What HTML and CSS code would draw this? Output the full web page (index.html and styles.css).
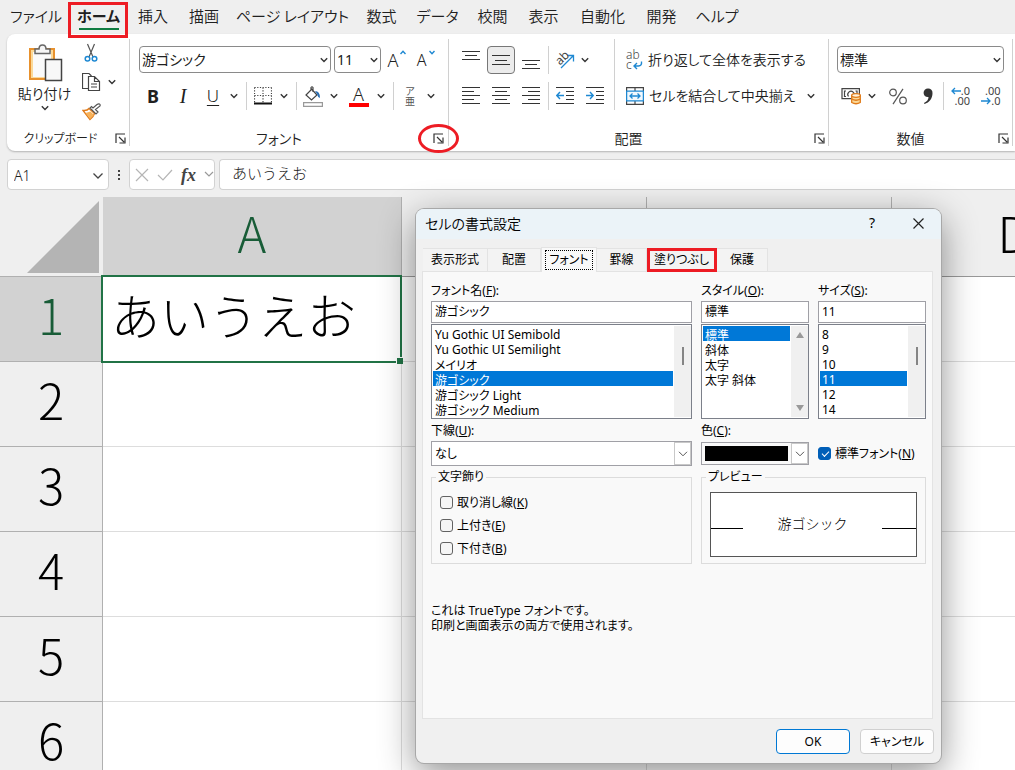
FILE: index.html
```html
<!DOCTYPE html>
<html lang="ja">
<head>
<meta charset="utf-8">
<meta name="viewport" content="width=device-width, initial-scale=1">
<title>セルの書式設定</title>
<link rel="stylesheet" href="styles.css">
</head>
<body>
<svg class="defs" aria-hidden="true">
  <symbol id="chev" viewBox="0 0 8 8"><path d="M.8 2.2 4 5.4 7.2 2.2" fill="none" stroke="#333" stroke-width="1.4"/></symbol>
  <symbol id="launch" viewBox="0 0 11 11"><path d="M1 10V1h9M4 4l5 5M10 4.500V10H4.500" fill="none" stroke="#333" stroke-width="1.200"/></symbol>
</svg>

<nav class="tabs" aria-label="リボン タブ">
  <button>ファイル</button>
  <button class="current marked">ホーム</button>
  <button>挿入</button>
  <button>描画</button>
  <button>ページ レイアウト</button>
  <button>数式</button>
  <button>データ</button>
  <button>校閲</button>
  <button>表示</button>
  <button>自動化</button>
  <button>開発</button>
  <button>ヘルプ</button>
</nav>

<section class="ribbon" aria-label="ホーム">
  <div class="group g-clip">
    <div class="tools clip-tools">
      <button class="paste">
        <svg width="36" height="40" viewBox="0 0 36 40"><path d="M3 5h24v30H3z" fill="#fbd998" stroke="#e8912d" stroke-width="2"/><path d="M6 8h18v25H6z" fill="#fafafa"/><path d="M8 9.500V5h4c0-5.500 7-5.500 7 0h4v4.500z" fill="#f5f5f5" stroke="#666" stroke-width="1.500"/><path d="M18.500 15.500h16v21h-16z" fill="#f8f8f8" stroke="#444" stroke-width="1.500"/></svg>
        <span>貼り付け</span>
        <svg width="8" height="8"><use href="#chev"/></svg>
      </button>
      <div class="clip-side">
        <button aria-label="切り取り"><svg width="14" height="20" viewBox="0 0 14 20"><path d="M3.500 1 9 14M10.500 1 5 14" fill="none" stroke="#555" stroke-width="1.200"/><circle cx="3.500" cy="15.800" r="2.300" fill="none" stroke="#1e88d2" stroke-width="1.500"/><circle cx="10.500" cy="15.800" r="2.300" fill="none" stroke="#1e88d2" stroke-width="1.500"/></svg></button>
        <button aria-label="コピー"><svg width="20" height="20" viewBox="0 0 20 20"><path d="M6 16.500H.5v-15H7l2.500 2.500" fill="none" stroke="#444" stroke-width="1.200"/><path d="M6.500 4.500h6l5 5v9h-11zM12.500 4.500v5h5M9 12h6M9 15h6" fill="#fff" stroke="#444" stroke-width="1.200"/></svg><svg width="8" height="8"><use href="#chev"/></svg></button>
        <button aria-label="書式のコピー"><svg width="20" height="18" viewBox="0 0 20 18"><path d="M1 7.500c3 .3 5-.5 6-2l5.500 5c-1 3-2.500 4.500-4.500 6z" fill="#fff" stroke="#e07b1a" stroke-width="1.400"/><path d="M3.500 10l5-1.500 3.500 3.500-4 4z" fill="#f7b25a"/><path d="M8 5l6 6 2-2-2.500-2.500L18 3q.5-1.500-.5-2T15 1.500L11 5 9.500 3.500z" fill="#fff" stroke="#555" stroke-width="1.200"/></svg></button>
      </div>
    </div>
    <div class="foot"><span>クリップボード</span><button class="launch" aria-label="クリップボードの設定"><svg width="11" height="11"><use href="#launch"/></svg></button></div>
  </div>

  <div class="group g-font">
    <div class="tools">
      <div class="row font-top">
        <span class="combo"><select aria-label="フォント"><option>游ゴシック</option></select><svg width="8" height="8"><use href="#chev"/></svg></span>
        <span class="combo"><select aria-label="フォント サイズ"><option>11</option></select><svg width="8" height="8"><use href="#chev"/></svg></span>
        <button class="grow" aria-label="フォント サイズの拡大">A<svg width="6" height="5" viewBox="0 0 6 5"><path d="M.5 4 3 1.200 5.500 4" fill="none" stroke="#1e88d2" stroke-width="1.400"/></svg></button>
        <button class="grow shrink" aria-label="フォント サイズの縮小">A<svg width="6" height="5" viewBox="0 0 6 5"><path d="M.5 1 3 3.800 5.500 1" fill="none" stroke="#1e88d2" stroke-width="1.400"/></svg></button>
      </div>
      <div class="row font-bottom">
        <button class="b">B</button>
        <button class="i">I</button>
        <button class="u">U</button>
        <button aria-label="下線の種類"><svg width="8" height="8"><use href="#chev"/></svg></button>
        <i class="sep"></i>
        <button aria-label="罫線"><svg width="18" height="18" viewBox="0 0 18 18"><path d="M.5.5h17M.5.5v15M17.500.5v15M9 .5v15M.5 8.500h17" fill="none" stroke="#444" stroke-width="1.200" stroke-dasharray="1.200 1.500"/><path d="M0 16.500h18" stroke="#111" stroke-width="2"/></svg></button>
        <button aria-label="罫線の種類"><svg width="8" height="8"><use href="#chev"/></svg></button>
        <i class="sep"></i>
        <button aria-label="塗りつぶしの色"><svg width="20" height="21" viewBox="0 0 20 21"><path d="M8 2.500 14 9l-5.500 5L3 9l5-5V1.500q1-1.500 2 0V6" fill="#fff" stroke="#444" stroke-width="1.200"/><path d="M12 5q5 0 5 7-2.500-1-3-4z" fill="#2a6fb5"/><path d="M.6 16.600h18.800v3.800H.6z" fill="#fff" stroke="#999" stroke-width="1.200"/></svg></button>
        <button aria-label="塗りつぶしの色の一覧"><svg width="8" height="8"><use href="#chev"/></svg></button>
        <button class="color-a">A</button>
        <button aria-label="文字色の一覧"><svg width="8" height="8"><use href="#chev"/></svg></button>
        <i class="sep"></i>
        <button class="ruby"><span>ア</span><span>亜</span></button>
        <button aria-label="ふりがなの設定"><svg width="8" height="8"><use href="#chev"/></svg></button>
      </div>
    </div>
    <div class="foot"><span>フォント</span><button class="launch ringed" aria-label="フォントの設定"><svg width="11" height="11"><use href="#launch"/></svg></button></div>
  </div>

  <div class="group g-align">
    <div class="tools align-tools">
      <div class="align-grid">
        <button aria-label="上揃え"><svg width="18" height="18" viewBox="0 0 18 18" class="ln"><path d="M0 .5h18M3 4.500h12M0 8.500h18"/></svg></button>
        <button class="on" aria-label="上下中央揃え"><svg width="18" height="18" viewBox="0 0 18 18" class="ln"><path d="M0 4.500h18M3 9.500h12M0 13.500h18"/></svg></button>
        <button aria-label="下揃え"><svg width="18" height="18" viewBox="0 0 18 18" class="ln"><path d="M0 9.500h18M3 13.500h12M0 17.500h18"/></svg></button>
        <i class="sep"></i>
        <button class="orient" aria-label="方向"><span>ab</span><svg width="20" height="20" viewBox="0 0 20 20"><path d="M6 18 18 6M12.500 5.500h6v6" fill="none" stroke="#1e88d2" stroke-width="1.300"/></svg></button>
        <button aria-label="方向の一覧"><svg width="8" height="8"><use href="#chev"/></svg></button>
        <button aria-label="左揃え"><svg width="18" height="18" viewBox="0 0 18 18" class="ln"><path d="M0 .5h18M0 4.500h12M0 8.500h18M0 12.500h12M0 16.500h18"/></svg></button>
        <button aria-label="中央揃え"><svg width="18" height="18" viewBox="0 0 18 18" class="ln"><path d="M0 .5h18M3 4.500h12M0 8.500h18M3 12.500h12M0 16.500h18"/></svg></button>
        <button aria-label="右揃え"><svg width="18" height="18" viewBox="0 0 18 18" class="ln"><path d="M0 .5h18M6 4.500h12M0 8.500h18M6 12.500h12M0 16.500h18"/></svg></button>
        <i class="sep"></i>
        <button aria-label="インデントを減らす"><svg width="18" height="18" viewBox="0 0 18 18" class="ln"><path d="M0 .5h18M10 4.500h8M10 8.500h8M10 12.500h8M0 16.500h18"/><path class="bl" d="M8 8.500H.8M4 5 .8 8.500 4 12"/></svg></button>
        <button class="indent" aria-label="インデントを増やす"><svg width="18" height="18" viewBox="0 0 18 18" class="ln"><path d="M0 .5h18M10 4.500h8M10 8.500h8M10 12.500h8M0 16.500h18"/><path class="bl" d="M0 8.500h7.200M4 5l3.200 3.500L4 12"/></svg></button>
      </div>
      <div class="align-wide">
        <button><span class="abc"><span>ab</span><span>c<svg width="10" height="9" viewBox="0 0 10 9"><path d="M8.500.5q.5 4.500-3 4.500H1M4 2 1 5l3 3" fill="none" stroke="#1e88d2" stroke-width="1.400"/></svg></span></span><span>折り返して全体を表示する</span></button>
        <button><svg width="18" height="18" viewBox="0 0 18 18"><path d="M.6 4V.6h16.800V4M.6 14v3.400h16.800V14M9 .6V4M9 14v3.400" fill="none" stroke="#444" stroke-width="1.200"/><path d="M.6 4.200h16.800v9.600H.6z" fill="#f1f8fd" stroke="#1e88d2" stroke-width="1.300"/><path d="M4 9h10M6.500 6.500 4 9l2.500 2.500M11.500 6.500 14 9l-2.500 2.500" fill="none" stroke="#1e88d2" stroke-width="1.300"/></svg><span>セルを結合して中央揃え</span><svg class="end-chev" width="8" height="8"><use href="#chev"/></svg></button>
      </div>
    </div>
    <div class="foot"><span>配置</span><button class="launch" aria-label="配置の設定"><svg width="11" height="11"><use href="#launch"/></svg></button></div>
  </div>

  <div class="group g-num">
    <div class="tools">
      <div class="row num-top">
        <span class="combo"><select aria-label="数値の書式"><option>標準</option></select><svg width="8" height="8"><use href="#chev"/></svg></span>
      </div>
      <div class="row num-bottom">
        <button aria-label="通貨表示形式"><svg width="20" height="18" viewBox="0 0 20 18"><path d="M1 1.600h17.400v10H1z" fill="#fff" stroke="#444" stroke-width="1.200"/><path d="M5 4H3.500v5.500H5M14.500 4H16v4M7.500 9.500a3.200 3.200 0 1 1 5 0" fill="none" stroke="#444" stroke-width="1.200"/><path d="M10.700 8.500v7q4.300 2.500 8.600 0v-7z" fill="#fbd998" stroke="#e07b1a" stroke-width="1.300"/><ellipse cx="15" cy="8.500" rx="4.300" ry="1.800" fill="#fff3dc" stroke="#e07b1a" stroke-width="1.300"/><path d="M10.700 12q4.300 2.500 8.600 0" fill="none" stroke="#e07b1a" stroke-width="1.300"/></svg></button>
        <button aria-label="通貨の一覧"><svg width="8" height="8"><use href="#chev"/></svg></button>
        <button aria-label="パーセント スタイル"><svg width="18" height="17" viewBox="0 0 18 17" fill="none" stroke="#555" stroke-width="1.200"><circle cx="4" cy="4.500" r="3.300"/><circle cx="14" cy="12.500" r="3.300"/><path d="M14 .8 4 16.200"/></svg></button>
        <button aria-label="桁区切りスタイル"><svg width="10" height="17" viewBox="0 0 10 17"><path d="M5 .5a4.300 4.300 0 0 1 4.500 4.700C9.500 10 6.500 14.500 1.500 16L1 15c3-1.500 4.500-3.500 4.500-6C3 9.500.6 7.500.6 5A4.300 4.300 0 0 1 5 .5z" fill="#333"/></svg></button>
        <i class="sep"></i>
        <button class="dec" aria-label="小数点以下の表示桁数を増やす"><span><svg width="10" height="8" viewBox="0 0 10 8"><path d="M10 4H1M4 1 1 4l3 3" fill="none" stroke="#1e88d2" stroke-width="1.300"/></svg>.0</span><span>.00</span></button>
        <button class="dec" aria-label="小数点以下の表示桁数を減らす"><span>.00</span><span><svg width="10" height="8" viewBox="0 0 10 8"><path d="M0 4h9M6 1l3 3-3 3" fill="none" stroke="#1e88d2" stroke-width="1.300"/></svg>.0</span></button>
      </div>
    </div>
    <div class="foot"><span>数値</span><button class="launch" aria-label="数値の設定"><svg width="11" height="11"><use href="#launch"/></svg></button></div>
  </div>
</section>

<section class="formula-bar" aria-label="数式バー">
  <span class="namebox"><input aria-label="名前ボックス" value="A1"><svg width="12" height="8" viewBox="0 0 12 8"><path d="M1.500 1.500 6 6l4.500-4.500" fill="none" stroke="#444" stroke-width="1.300"/></svg></span>
  <svg class="dots" width="4" height="12" viewBox="0 0 4 12"><path d="M1 1h2v2H1zM1 5h2v2H1zM1 9h2v2H1z" fill="#444"/></svg>
  <span class="fx-box">
    <button aria-label="キャンセル"><svg width="14" height="14" viewBox="0 0 14 14"><path d="M1 1l12 12M13 1 1 13" stroke="#b5b5b5" stroke-width="1.200"/></svg></button>
    <button aria-label="入力"><svg width="16" height="12" viewBox="0 0 16 12"><path d="M1 6l5 5L15 1" fill="none" stroke="#b5b5b5" stroke-width="1.200"/></svg></button>
    <button class="fx">fx</button>
    <svg width="10" height="7" viewBox="0 0 10 7"><path d="M1 1l4 4 4-4" fill="none" stroke="#999" stroke-width="1.200"/></svg>
  </span>
  <input class="formula" aria-label="数式" value="あいうえお">
</section>

<main class="sheet">
  <table>
    <colgroup><col class="c-head"><col class="c-a"><col class="c-n"><col class="c-n"><col class="c-n"></colgroup>
    <thead>
      <tr><th class="corner"><svg width="72" height="72" viewBox="0 0 72 72"><path d="M72 0v72H0z" fill="#b4b4b4"/></svg></th><th class="sel">A</th><th></th><th></th><th>D</th></tr>
    </thead>
    <tbody>
      <tr><th class="sel">1</th><td class="active">あいうえお</td><td></td><td></td><td></td></tr>
      <tr><th>2</th><td></td><td></td><td></td><td></td></tr>
      <tr><th>3</th><td></td><td></td><td></td><td></td></tr>
      <tr><th>4</th><td></td><td></td><td></td><td></td></tr>
      <tr><th>5</th><td></td><td></td><td></td><td></td></tr>
      <tr><th>6</th><td></td><td></td><td></td><td></td></tr>
    </tbody>
  </table>
</main>

<div class="dialog" role="dialog" aria-labelledby="dlg-title">
  <header>
    <h1 id="dlg-title">セルの書式設定</h1>
    <button aria-label="ヘルプ">?</button>
    <button aria-label="閉じる"><svg width="11" height="11" viewBox="0 0 11 11"><path d="M.5.5l10 10M10.500.5l-10 10" stroke="#222" stroke-width="1.200"/></svg></button>
  </header>
  <div class="dlg-tabs" role="tablist">
    <button role="tab">表示形式</button>
    <button role="tab">配置</button>
    <button role="tab" class="front" aria-selected="true"><span>フォント</span></button>
    <button role="tab">罫線</button>
    <button role="tab" class="marked">塗りつぶし</button>
    <button role="tab">保護</button>
  </div>
  <div class="panel">
    <div class="field">
      <label for="f-name">フォント名(<u>F</u>):</label>
      <input id="f-name" value="游ゴシック">
      <div class="list">
        <select size="6" aria-label="フォント名の一覧"><option>Yu Gothic UI Semibold</option><option>Yu Gothic UI Semilight</option><option>メイリオ</option><option selected>游ゴシック</option><option>游ゴシック Light</option><option>游ゴシック Medium</option></select>
        <div class="bar"><i></i></div>
      </div>
    </div>
    <div class="field">
      <label for="f-style">スタイル(<u>O</u>):</label>
      <input id="f-style" value="標準">
      <div class="list">
        <select size="6" aria-label="スタイルの一覧"><option selected>標準</option><option>斜体</option><option>太字</option><option>太字 斜体</option></select>
        <div class="bar arrows"><svg width="10" height="7" viewBox="0 0 10 7"><path d="M5 0l4 6H1z" fill="#999"/></svg><svg width="10" height="7" viewBox="0 0 10 7"><path d="M5 7 1 1h8z" fill="#999"/></svg></div>
      </div>
    </div>
    <div class="field">
      <label for="f-size">サイズ(<u>S</u>):</label>
      <input id="f-size" value="11">
      <div class="list">
        <select size="6" aria-label="サイズの一覧"><option>8</option><option>9</option><option>10</option><option selected>11</option><option>12</option><option>14</option></select>
        <div class="bar"><i></i></div>
      </div>
    </div>
    <div class="field second">
      <label for="f-line">下線(<u>U</u>):</label>
      <span class="drop"><select id="f-line"><option>なし</option></select><i><svg width="10" height="6" viewBox="0 0 10 6"><path d="M1 .8l4 4 4-4" fill="none" stroke="#555"/></svg></i></span>
    </div>
    <div class="field second">
      <label for="f-color">色(<u>C</u>):</label>
      <span class="drop swatch"><select id="f-color"><option value="#000000" label=" "></option></select><i><svg width="10" height="6" viewBox="0 0 10 6"><path d="M1 .8l4 4 4-4" fill="none" stroke="#555"/></svg></i></span>
    </div>
    <label class="check normal"><input type="checkbox" checked><span>標準フォント(<u>N</u>)</span></label>
    <fieldset>
      <legend>文字飾り</legend>
      <label class="check"><input type="checkbox"><span>取り消し線(<u>K</u>)</span></label>
      <label class="check"><input type="checkbox"><span>上付き(<u>E</u>)</span></label>
      <label class="check"><input type="checkbox"><span>下付き(<u>B</u>)</span></label>
    </fieldset>
    <fieldset class="preview">
      <legend>プレビュー</legend>
      <div class="sample"><i></i><span>游ゴシック</span><i></i></div>
    </fieldset>
    <p>これは TrueType フォントです。<br>印刷と画面表示の両方で使用されます。</p>
  </div>
  <footer>
    <button class="ok">OK</button>
    <button>キャンセル</button>
  </footer>
</div>
</body>
</html>
```

FILE: styles.css
```css
* { box-sizing: border-box; }

body {
  margin: 0;
  height: 100vh;
  display: flex;
  flex-direction: column;
  position: relative;
  overflow: hidden;
  background: #efefef;
  color: #202020;
  font-family: "Noto Sans", "Noto Sans CJK JP", sans-serif;
  font-size: 14px;
  line-height: 20px;
  font-feature-settings: "palt";
}

button, input, select {
  margin: 0;
  padding: 0;
  border: 0;
  background: none;
  color: inherit;
  font: inherit;
  font-feature-settings: inherit;
  border-radius: 0;
  outline: 0;
}

select { appearance: none; }
svg { display: block; flex: none; }
.defs { position: absolute; width: 0; height: 0; }

/* ribbon tabs */
.tabs {
  flex: none;
  display: grid;
  grid-template-columns: 66px 59px 50px 52px 125px 53px 59px 51px 51px 67px 51px 60px;
  height: 34px;
  padding: 2px 0 0 3px;
  font-family: "Noto Sans CJK JP", sans-serif;
  font-size: 15px;
  font-weight: 350;
}
.tabs button { height: 28px; white-space: nowrap; position: relative; }
.tabs .current { font-weight: 700; }
.tabs .current::before {
  content: "";
  position: absolute;
  left: 10px;
  right: 9px;
  bottom: 0;
  height: 2px;
  background: #107c41;
}
.marked { position: relative; }
.marked::after {
  content: "";
  position: absolute;
  z-index: 2;
  inset: 0 0 -8px -1px;
  border: 3px solid #ed1c24;
  pointer-events: none;
}

/* ribbon */
.ribbon {
  flex: none;
  display: flex;
  margin-left: 7px;
  padding: 5px 0;
  background: #fff;
  border-radius: 8px 0 0 8px;
  box-shadow: 0 1px 2px rgba(0, 0, 0, .25);
}
.ribbon button { display: flex; align-items: center; justify-content: center; }
.group {
  flex: none;
  height: 107px;
  display: flex;
  flex-direction: column;
  justify-content: space-between;
  border-right: 1px solid #d0d0d0;
}
.g-clip { width: 123px; }
.g-font { width: 319px; }
.g-align { width: 380px; }
.g-num { width: 184px; }
.foot {
  display: flex;
  align-items: center;
  justify-content: center;
  position: relative;
  height: 16px;
  padding-right: 20px;
  font-weight: 350;
}
.foot span { font-family: "Noto Sans CJK JP", sans-serif; }
.g-clip .foot { padding-right: 15px; font-size: 12px; }
.launch { position: absolute; right: 3px; top: 3px; }
.ringed { right: 4px; }
.ringed::after {
  content: "";
  position: absolute;
  inset: -9px -15px;
  border: 3px solid #ed1c24;
  border-radius: 50%;
}
.sep { width: 1px; height: 28px; background: #d0d0d0; justify-self: center; align-self: center; }

.clip-tools { display: flex; }
.ribbon .paste {
  flex-direction: column;
  justify-content: flex-start;
  width: 75px;
  padding-top: 5px;
  font-weight: 350;
}
.clip-side { display: grid; grid-template-rows: 28px 30px 30px; width: 46px; }
.clip-side button { justify-content: flex-start; gap: 6px; }
.clip-side button:first-child { justify-content: center; width: 18px; }

.row { display: grid; align-items: center; }
.combo { position: relative; display: block; }
.combo select {
  width: 100%;
  height: 27px;
  padding: 0 2px;
  background: #fff;
  border: 1px solid #8a8a8a;
  border-radius: 4px;
}
.combo svg { position: absolute; right: 3px; top: 10px; pointer-events: none; }

.font-top { grid-template-columns: 192px 47px 26px 26px; column-gap: 3px; padding: 7px 0 8px 9px; }
.ribbon .grow { align-items: flex-start; gap: 2px; font-size: 18px; font-weight: 350; }
.ribbon .shrink { gap: 3px; font-size: 16px; }
.font-bottom {
  grid-template-columns: 30px 30px 30px 12px 12px 22px 20px 4px 30px 12px 37px 8px 16px 18px 24px;
  padding-left: 8px;
  height: 30px;
}
.b { font-weight: 700; font-size: 18px; }
.i { font-family: "Liberation Serif", serif; font-style: italic; font-size: 20px; }
.u { font-size: 17px; font-weight: 350; text-decoration: underline; text-underline-offset: 3px; }
.ribbon .color-a {
  justify-self: center;
  width: 20px;
  height: 21px;
  border-bottom: 4px solid #f00;
  font-size: 18px;
  font-weight: 350;
  line-height: 16px;
}
.ribbon .ruby { flex-direction: column; font-size: 10px; line-height: 10px; color: #555; }

.align-tools { display: flex; }
.align-grid {
  display: grid;
  grid-template-columns: 30px 30px 30px 4px 30px 10px;
  grid-template-rows: 28px 28px;
  row-gap: 8px;
  width: 166px;
  padding: 7px 0 0 7px;
  border-right: 1px solid #d0d0d0;
}
.align-grid .indent { width: 30px; }
.align-grid .on { width: 28px; justify-self: center; background: #ececec; border: 1px solid #777; border-radius: 4px; }
.ln { fill: none; stroke: #333; stroke-width: 1px; }
.ln .bl { stroke: #1e88d2; stroke-width: 1.4px; }
.orient { position: relative; }
.orient span {
  position: absolute;
  left: 5px;
  top: 5px;
  transform: rotate(-45deg);
  font-size: 12px;
  line-height: 14px;
  color: #444;
}
.abc { display: grid; width: 17px; font-size: 12px; line-height: 10px; text-align: left; color: #444; }
.abc span { display: flex; align-items: center; gap: 1px; height: 10px; }
.ribbon .dec { flex-direction: column; align-items: flex-end; justify-self: center; width: 19px; font-size: 11px; line-height: 10px; color: #444; }
.dec span { display: flex; align-items: center; height: 10px; }
.align-wide { display: grid; grid-template-rows: 28px 28px; row-gap: 8px; flex: 1; padding: 7px 13px 0 11px; font-weight: 350; }
.ribbon .align-wide button { justify-content: flex-start; gap: 5px; white-space: nowrap; }
.end-chev { margin-left: auto; }

.num-top { padding: 7px 8px; height: 43px; align-items: start; }
.num-bottom { grid-template-columns: 32px 10px 41px 20px 11px 23px 38px; padding-left: 6px; height: 28px; }

/* formula bar */
.formula-bar { flex: none; display: flex; align-items: center; padding: 8px 0 7px 7px; height: 46px; }
.namebox, .fx-box, .formula { height: 31px; background: #fff; border: 1px solid #d2d2d2; border-radius: 4px; }
.namebox { display: flex; align-items: center; width: 102px; padding: 2px 4px 0 6px; }
.namebox input { flex: 1; min-width: 0; font-weight: 350; }
.dots { margin: 0 8px; }
.fx-box { display: flex; align-items: center; gap: 8px; width: 86px; padding: 0 1px 0 5px; }
.fx { font-family: "Liberation Serif", serif; font-style: italic; font-weight: 700; font-size: 18px; color: #444; }
.formula {
  flex: 1;
  min-width: 0;
  margin-left: 4px;
  padding: 0 12px 4px;
  border-right: 0;
  border-radius: 4px 0 0 4px;
  font-family: "Noto Sans CJK JP", sans-serif;
  font-size: 15px;
  font-weight: 300;
  font-feature-settings: normal;
}

/* worksheet */
.sheet { flex: 1; min-height: 0; overflow: hidden; }
.sheet table {
  table-layout: fixed;
  width: 1137px;
  border-collapse: separate;
  border-spacing: 0;
  font-family: "Noto Sans CJK JP", sans-serif;
  font-size: 49px;
  font-weight: 300;
  line-height: 60px;
  font-feature-settings: normal;
  color: #000;
}
.c-head { width: 103px; }
.c-a { width: 299px; }
.c-n { width: 245px; }
.sheet th { padding: 0 0 10px; font-weight: 300; background: #efefef; border-right: 1px solid #b0b0b0; border-bottom: 1px solid #b0b0b0; }
.sheet thead th { height: 80px; border-bottom-color: #999; }
.sheet tbody th, .sheet td { height: 85px; }
.sheet .corner { padding: 0; border-right-color: #efefef; border-bottom-color: #b0b0b0; }
.corner svg { margin: 0 0 0 27px; }
.sheet td { padding: 0 8px 10px; background: #fff; border-right: 1px solid #ddd; border-bottom: 1px solid #ddd; }
.sheet .sel { background: #d2d2d2; color: #185c37; }
.sheet .active { position: relative; }
.active::before {
  content: "";
  position: absolute;
  inset: -2px -1px -2px -2px;
  border: 2px solid #217346;
}
.active::after {
  content: "";
  position: absolute;
  right: -2px;
  bottom: -3px;
  width: 6px;
  height: 6px;
  background: #217346;
  border: 1px solid #fff;
  border-width: 1px 0 0 1px;
}

/* format cells window */
.dialog {
  position: absolute;
  left: 416px;
  top: 209px;
  width: 525px;
  background: #f0f0f0;
  border-radius: 8px;
  box-shadow: 0 0 0 1px #a8a8a8, 0 10px 36px rgba(0, 0, 0, .45);
  color: #000;
  font-size: 12px;
  line-height: 16px;
}
.dialog header { display: flex; align-items: center; height: 30px; padding: 0 0 2px 9px; background: #ebf3f8; border-radius: 8px 8px 0 0; }
.dialog h1 { flex: 1; margin: 0; font-size: 14px; font-weight: 350; font-family: "Noto Sans CJK JP", sans-serif; }
.dialog header button { display: flex; align-items: center; justify-content: center; width: 46px; height: 28px; font-size: 14px; }
.dlg-tabs { display: flex; align-items: flex-end; height: 32px; padding: 7px 0 0 7px; }
.dlg-tabs button { height: 23px; width: 53px; background: #f3f3f3; border: 1px solid #e3e3e3; border-width: 1px 1px 0 0; white-space: nowrap; }
.dlg-tabs button:first-child { width: 65px; }
.dlg-tabs .front { position: relative; z-index: 1; width: 56px; height: 25px; margin-bottom: -1px; padding: 0 3px; background: #f9f9f9; border-left-width: 1px; }
.dlg-tabs .front span { display: block; border: 1px dotted #000; line-height: 18px; }
.dlg-tabs button:nth-child(4) { width: 50px; }
.dlg-tabs .marked { width: 70px; }
.dlg-tabs .marked::after { inset: -1px -1px -1px 0; }
.dlg-tabs button:last-child { width: 51px; }

.panel {
  display: grid;
  grid-template-columns: 261fr 108fr 108fr;
  column-gap: 9px;
  align-content: start;
  margin: 0 8px 0 6px;
  padding: 11px 6px 0 8px;
  height: 448px;
  background: #f9f9f9;
  border: 1px solid #e3e3e3;
}
.field { display: flex; flex-direction: column; min-width: 0; }
.field label { margin-bottom: 2px; }
.field input { width: 100%; height: 22px; padding: 0 3px 2px; background: #fff; border: 1px solid #a0a0a6; }
.list { display: flex; height: 95px; margin-top: 1px; border: 1px solid #7c808a; background: #fff; }
.list select { flex: 1; min-width: 0; height: 93px; padding: 1px; overflow: hidden; border: 0; }
.list option { height: 15px; min-height: 15px; padding: 0 2px; line-height: 15px; }
.list option:checked { background: #0078d7 linear-gradient(#0078d7, #0078d7); color: #fff; -webkit-text-fill-color: #fff; }
.bar { width: 17px; margin: 1px 0; padding-top: 21px; background: #f0f0f0; }
.bar i { display: block; width: 2px; height: 18px; margin: 0 auto; background: #858585; }
.bar.arrows { display: flex; flex-direction: column; align-items: center; justify-content: space-between; padding: 6px 0; }

.second { margin-top: 4px; }
.drop { position: relative; display: block; }
.drop select { display: block; width: 100%; height: 25px; padding: 0 3px; background: #fff; border: 1px solid #a0a0a6; }
.drop i {
  position: absolute;
  top: 1px;
  right: 1px;
  bottom: 1px;
  width: 17px;
  display: flex;
  align-items: center;
  justify-content: center;
  background: #fff;
  border: 1px solid #c8c8c8;
  pointer-events: none;
}
.drop.swatch { padding: 1px 0; }
.drop.swatch select { height: 23px; padding: 3px 20px 3px 3px; background: #000; background-clip: content-box; }
.drop.swatch i { top: 2px; bottom: 2px; }

.check { display: flex; align-items: center; gap: 4px; white-space: nowrap; }
.check input { appearance: none; position: relative; flex: none; width: 13px; height: 13px; padding: 0; background: #f5f5f5; border: 1px solid #626262; border-radius: 3px; }
.check input:checked { background: #005fb8; border-color: #005fb8; }
.check input:checked::before {
  content: "";
  position: absolute;
  left: 3px;
  top: 3px;
  width: 6px;
  height: 3px;
  border: solid #fff;
  border-width: 0 0 1px 1px;
  transform: rotate(-45deg);
}
.normal { align-self: end; height: 25px; }

fieldset { min-width: 0; height: 95px; margin: 3px 0 0; padding: 6px 8px; border: 1px solid #dcdcdc; }
legend { padding: 0 2px; margin-left: -4px; line-height: 16px; }
fieldset .check { height: 23px; }
.preview { grid-column: 2 / 4; }
.sample { display: grid; grid-template-columns: 32px 1fr 34px; align-items: center; height: 65px; margin-top: 1px; background: #fff; border: 1px solid #555; }
.sample span { padding-bottom: 4px; text-align: center; font-family: "Noto Sans CJK JP", sans-serif; font-size: 14px; font-weight: 300; font-feature-settings: normal; }
.sample i { height: 1px; background: #000; margin-top: 8px; }
.panel p { grid-column: 1 / 4; margin: 39px 0 0; line-height: 15px; }

.dialog footer { display: flex; justify-content: flex-end; gap: 10px; padding: 10px 7px 9px 0; }
.dialog footer button { width: 74px; height: 25px; background: #fdfdfd; border: 1px solid #d0d0d0; border-radius: 4px; }
.dialog footer .ok { border-color: #0078d4; }
```
